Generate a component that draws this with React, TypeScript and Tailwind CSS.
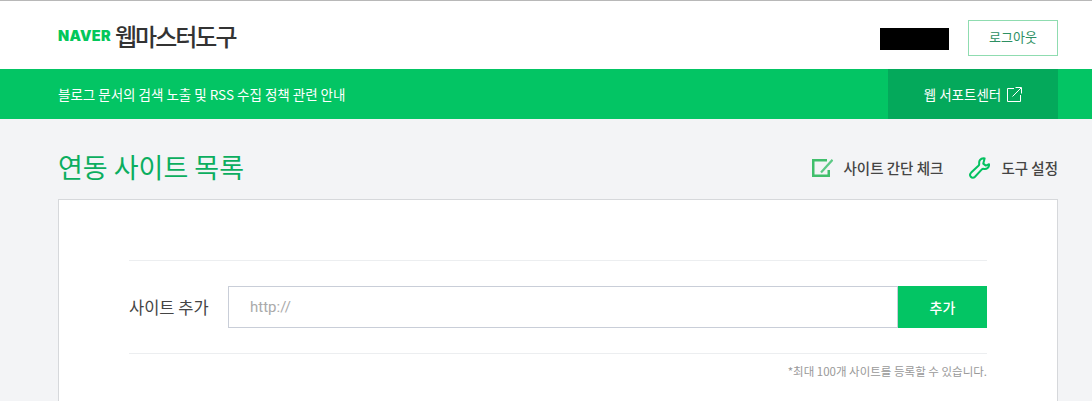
const kr = "font-['Noto_Sans_CJK_KR','Noto_Sans',sans-serif]";

function EditIcon() {
  return (
    <svg width="21" height="18" viewBox="0 0 21 18" fill="none" className="shrink-0">
      <path d="M15 1.25H1.25V16.75H16.75V11" stroke="#40bf6c" strokeWidth="2.5" />
      <path d="M9 13.5L20.5 0.8" stroke="#5cc985" strokeWidth="2.2" />
    </svg>
  );
}

function WrenchIcon() {
  return (
    <svg width="21" height="22" viewBox="0 0 21 22" fill="none" className="shrink-0">
      <path
        d="M14.5 1.2C11.5 1.4 9.8 3.6 10.2 6.6C10.3 7.5 10 8.2 9.4 8.8L2.2 15.6C0.8 17 0.8 18.6 1.8 19.8C3 21.1 4.7 21 6 19.7L12.6 12.6C13.2 12 14 11.7 14.9 11.9C17.8 12.4 20.2 10.4 20.1 7.2L16.8 8.6L14.3 6.6L15.6 1.4C15.2 1.2 14.9 1.2 14.5 1.2Z"
        stroke="#04c160"
        strokeWidth="2"
        strokeLinejoin="round"
      />
    </svg>
  );
}

function OutLinkIcon() {
  return (
    <svg width="15" height="15" viewBox="0 0 15 15" fill="none" className="shrink-0">
      <path d="M7 1.5H0.5V14.5H13.5V8" stroke="white" />
      <path d="M5.5 9.5L14 1M8.5 0.5H14.5V6.5" stroke="white" />
    </svg>
  );
}

export default function App() {
  return (
    <div className={`h-[401px] overflow-hidden bg-[#f3f4f6] ${kr}`}>
      <header className="h-[69px] border-t border-[#b8b8b8] bg-white">
        <div className="ml-[58px] flex h-[68px] w-[1000px] items-center justify-between">
          <div className="flex items-center gap-[4px] pt-[2px]">
            <span className="font-['Inter',sans-serif] text-[14.5px] font-black leading-none tracking-[0.3px] text-[#03c75a]">
              NAVER
            </span>
            <span className="text-[24px] font-medium leading-none tracking-[-2px] text-[#333]">웹마스터도구</span>
          </div>
          <div className="flex items-center gap-[19px] pt-[5px]">
            <div className="mt-[3px] h-[22px] w-[69px] bg-black" />
            <button className="h-[36px] w-[90px] border border-[#8fdcb0] pb-[2px] text-[13px] text-[#2d8f62]">로그아웃</button>
          </div>
        </div>
      </header>

      <div className="h-[50px] bg-[#03c564]">
        <div className="ml-[58px] flex h-full w-[1000px] items-center justify-between">
          <p className="text-[13.5px] text-white">블로그 문서의 검색 노출 및 RSS 수집 정책 관련 안내</p>
          <a className="flex h-full w-[170px] items-center justify-center gap-[6px] bg-[#04a95b] text-[13.5px] text-white">
            웹 서포트센터
            <OutLinkIcon />
          </a>
        </div>
      </div>

      <main className="ml-[58px] w-[1000px]">
        <div className="flex h-[80px] items-center justify-between pt-[18px]">
          <h2 className="mb-[4px] text-[27px] leading-none text-[#0bae5f]">연동 사이트 목록</h2>
          <div className="flex items-center gap-[26px] text-[14.5px] font-medium text-[#444]">
            <span className="flex items-center gap-[10px]">
              <EditIcon />
              사이트 간단 체크
            </span>
            <span className="flex items-center gap-[11px]">
              <WrenchIcon />
              도구 설정
            </span>
          </div>
        </div>

        <section className="h-[210px] border border-[#d6d8db] bg-white px-[70px] pt-[60px]">
          <div className="border-y border-[#eceef0] py-[25px]">
            <div className="flex h-[42px] items-center">
              <label className="w-[99px] text-[16.5px] text-[#444]">사이트 추가</label>
              <input
                placeholder="http://"
                className="h-full flex-1 border border-[#c9ced8] bg-white px-[21px] font-['Roboto',sans-serif] text-[15px] placeholder:text-[#aaa]"
              />
              <button className="h-full w-[89px] bg-[#03c564] text-[14px] font-medium text-white">추가</button>
            </div>
          </div>
          <p className="mt-[9px] text-right text-[11.5px] text-[#999]">*최대 100개 사이트를 등록할 수 있습니다.</p>
        </section>
      </main>
    </div>
  );
}
